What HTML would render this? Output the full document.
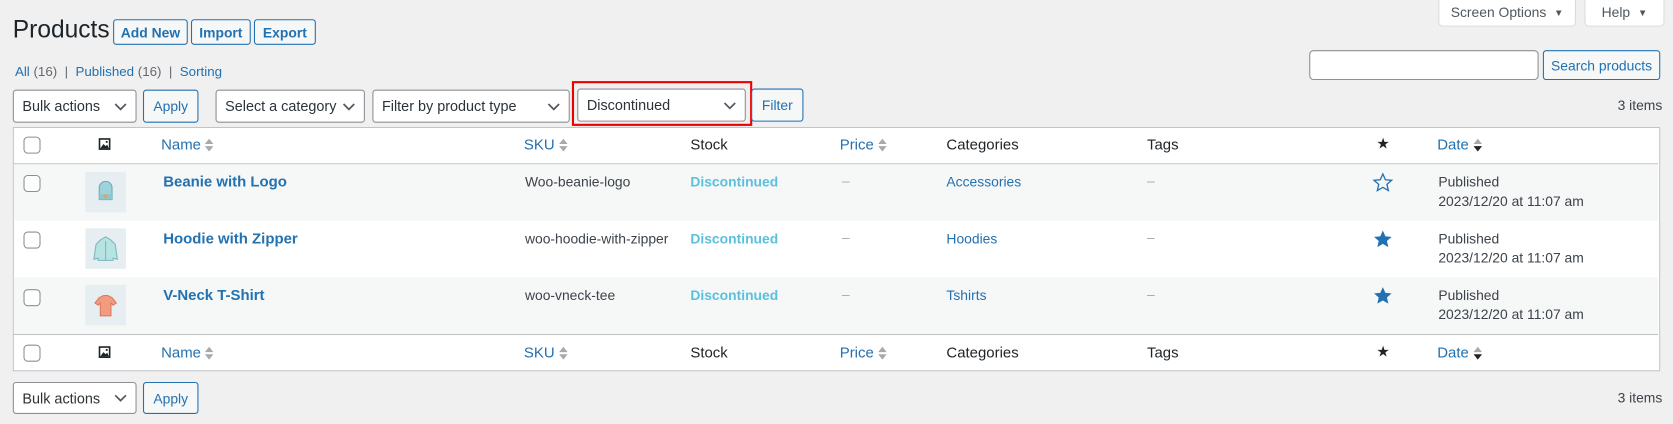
<!DOCTYPE html>
<html><head><meta charset="utf-8"><style>
*{box-sizing:border-box;margin:0;padding:0}
html,body{width:1673px;height:424px;overflow:hidden}
body{background:#f0f0f1;font-family:"Liberation Sans",sans-serif;font-size:13px;color:#3c434a;position:relative}
#w{position:absolute;left:0;top:0;width:1568px;height:397px;transform:scale(1.067);transform-origin:0 0}
.a{position:absolute;white-space:nowrap}
.btn{position:absolute;border:1px solid #2271b1;color:#2271b1;background:#f6f7f7;border-radius:3px;display:flex;align-items:center;justify-content:center;font-size:13px}
.sel{position:absolute;border:1px solid #8c8f94;background:#fff;border-radius:3px;color:#2c3338;font-size:13.5px;padding-left:8px;display:flex;align-items:center}
.sel svg{position:absolute;right:8px;top:50%;margin-top:-4px}
.l{color:#2271b1}
.cb{position:absolute;width:16px;height:16px;border:1px solid #8c8f94;border-radius:4px;background:#fff;left:22px}
.row{position:absolute;left:13px;width:1541px}
.thumb{position:absolute;left:80px;width:38px;height:38px;background:#e7eef1}
.sort{display:inline-block;vertical-align:middle;margin-left:4px}
</style></head><body><div id="w">
<div class="a" style="left:12px;top:14px;font-size:23px;color:#1d2327">Products</div>
<div class="btn" style="left:106px;top:18px;width:70px;height:24px;font-weight:bold">Add New</div>
<div class="btn" style="left:179px;top:18px;width:56px;height:24px;font-weight:bold">Import</div>
<div class="btn" style="left:238px;top:18px;width:58px;height:24px;font-weight:bold">Export</div>

<div style="position:absolute;left:1348px;top:-2px;width:129px;height:27px;background:#fff;border:1px solid #dcdcde;border-radius:0 0 4px 4px;color:#50575e;font-size:13px;display:flex;align-items:center;justify-content:center">Screen Options&nbsp;&nbsp;<span style="font-size:9px">▼</span></div>
<div style="position:absolute;left:1485px;top:-2px;width:75px;height:27px;background:#fff;border:1px solid #dcdcde;border-radius:0 0 4px 4px;color:#50575e;font-size:13px;display:flex;align-items:center;justify-content:center">Help&nbsp;&nbsp;<span style="font-size:9px">▼</span></div>

<div class="a" style="left:14px;top:60px;font-size:12.5px;color:#646970"><span class="l">All</span> (16) &nbsp;|&nbsp; <span class="l">Published</span> (16) &nbsp;|&nbsp; <span class="l">Sorting</span></div>

<div style="position:absolute;left:1227px;top:47px;width:215px;height:28px;background:#fff;border:1px solid #8c8f94;border-radius:4px"></div>
<div class="btn" style="left:1446px;top:47px;width:110px;height:28px">Search products</div>

<svg width="0" height="0" style="position:absolute"><defs><symbol id="ch" viewBox="0 0 12 8"><path d="M1 1.5l5 5 5-5" fill="none" stroke="#50575e" stroke-width="1.6"/></symbol></defs></svg>

<div class="sel" style="left:12px;top:84px;width:116px;height:31px">Bulk actions<svg width="12" height="8"><use href="#ch"/></svg></div>
<div class="btn" style="left:134px;top:84px;width:52px;height:31px">Apply</div>
<div class="sel" style="left:202px;top:84px;width:140px;height:31px">Select a category<svg width="12" height="8"><use href="#ch"/></svg></div>
<div class="sel" style="left:349px;top:84px;width:185px;height:31px">Filter by product type<svg width="12" height="8"><use href="#ch"/></svg></div>
<div style="position:absolute;left:536px;top:76px;width:169px;height:42px;border:2px solid #e00"></div>
<div class="sel" style="left:541px;top:83px;width:158px;height:31px">Discontinued<svg width="12" height="8"><use href="#ch"/></svg></div>
<div class="btn" style="left:704px;top:83px;width:49px;height:31px">Filter</div>
<div class="a" style="left:1516px;top:91px;color:#3c434a">3 items</div>

<div style="position:absolute;left:12px;top:119px;width:1544px;height:229px;border:1px solid #c3c4c7;background:#fff"></div>
<div class="row" style="top:153px;height:1px;background:#c3c4c7"></div>
<div class="row" style="top:154px;height:53px;background:#f6f7f7"></div>
<div class="row" style="top:260px;height:53px;background:#f6f7f7"></div>
<div class="row" style="top:313px;height:1px;background:#c3c4c7"></div>

<div class="cb" style="top:128px"></div>
<div class="cb" style="top:323px"></div>

<svg class="a" style="left:92px;top:129px" width="12" height="12" viewBox="0 0 12 12"><rect x="0.5" y="0.5" width="11" height="11" fill="#1d2327"/><rect x="2" y="2" width="8" height="8" fill="#fff"/><path d="M2 10l3-4 2 2 1.5-1.5L10 10z" fill="#1d2327"/><circle cx="8" cy="4" r="1" fill="#1d2327"/></svg>
<svg class="a" style="left:92px;top:324px" width="12" height="12" viewBox="0 0 12 12"><rect x="0.5" y="0.5" width="11" height="11" fill="#1d2327"/><rect x="2" y="2" width="8" height="8" fill="#fff"/><path d="M2 10l3-4 2 2 1.5-1.5L10 10z" fill="#1d2327"/><circle cx="8" cy="4" r="1" fill="#1d2327"/></svg>

<div class="a l" style="left:151px;top:127px;font-size:14px">Name<svg class="sort" width="8" height="14"><path d="M0 6l4-5 4 5z" fill="#a7aaad"/><path d="M0 8l4 5 4-5z" fill="#a7aaad"/></svg></div>
<div class="a l" style="left:491px;top:127px;font-size:14px">SKU<svg class="sort" width="8" height="14"><path d="M0 6l4-5 4 5z" fill="#a7aaad"/><path d="M0 8l4 5 4-5z" fill="#a7aaad"/></svg></div>
<div class="a" style="left:647px;top:127px;font-size:14px;color:#1d2327">Stock</div>
<div class="a l" style="left:787px;top:127px;font-size:14px">Price<svg class="sort" width="8" height="14"><path d="M0 6l4-5 4 5z" fill="#a7aaad"/><path d="M0 8l4 5 4-5z" fill="#a7aaad"/></svg></div>
<div class="a" style="left:887px;top:127px;font-size:14px;color:#1d2327">Categories</div>
<div class="a" style="left:1075px;top:127px;font-size:14px;color:#1d2327">Tags</div>
<div class="a" style="left:1290px;top:126px;font-size:14px;color:#1d2327">★</div>
<div class="a l" style="left:1347px;top:127px;font-size:14px">Date<svg class="sort" width="8" height="14"><path d="M0 6l4-5 4 5z" fill="#a7aaad"/><path d="M0 8l4 5 4-5z" fill="#1d2327"/></svg></div>

<div class="a l" style="left:151px;top:322px;font-size:14px">Name<svg class="sort" width="8" height="14"><path d="M0 6l4-5 4 5z" fill="#a7aaad"/><path d="M0 8l4 5 4-5z" fill="#a7aaad"/></svg></div>
<div class="a l" style="left:491px;top:322px;font-size:14px">SKU<svg class="sort" width="8" height="14"><path d="M0 6l4-5 4 5z" fill="#a7aaad"/><path d="M0 8l4 5 4-5z" fill="#a7aaad"/></svg></div>
<div class="a" style="left:647px;top:322px;font-size:14px;color:#1d2327">Stock</div>
<div class="a l" style="left:787px;top:322px;font-size:14px">Price<svg class="sort" width="8" height="14"><path d="M0 6l4-5 4 5z" fill="#a7aaad"/><path d="M0 8l4 5 4-5z" fill="#a7aaad"/></svg></div>
<div class="a" style="left:887px;top:322px;font-size:14px;color:#1d2327">Categories</div>
<div class="a" style="left:1075px;top:322px;font-size:14px;color:#1d2327">Tags</div>
<div class="a" style="left:1290px;top:321px;font-size:14px;color:#1d2327">★</div>
<div class="a l" style="left:1347px;top:322px;font-size:14px">Date<svg class="sort" width="8" height="14"><path d="M0 6l4-5 4 5z" fill="#a7aaad"/><path d="M0 8l4 5 4-5z" fill="#1d2327"/></svg></div>

<div class="cb" style="top:164px"></div>
<div class="thumb" style="top:161px"><svg width="38" height="38"><path d="M13 26V15a6 6 0 0 1 12 0v11z" fill="#9fd3dc" stroke="#6aa9b8"/><rect x="13" y="21" width="12" height="5" fill="#8cc7d2"/><circle cx="19" cy="23" r="1.8" fill="#e9a15a"/></svg></div>
<div class="a l" style="left:153px;top:162px;font-size:14px;font-weight:bold">Beanie with Logo</div>
<div class="a" style="left:492px;top:163px">Woo-beanie-logo</div>
<div class="a" style="left:647px;top:163px;color:#5bc0de;font-weight:bold">Discontinued</div>
<div class="a" style="left:789px;top:162px;color:#a7aaad">–</div>
<div class="a l" style="left:887px;top:163px">Accessories</div>
<div class="a" style="left:1075px;top:162px;color:#a7aaad">–</div>
<svg class="a" style="left:1286px;top:161px" width="20" height="20" viewBox="0 0 24 24"><path d="M12 2.5l2.9 6.5 7 .6-5.3 4.6 1.6 6.9L12 17.5l-6.2 3.6 1.6-6.9L2.1 9.6l7-.6z" fill="none" stroke="#2271b1" stroke-width="1.5"/></svg>
<div class="a" style="left:1348px;top:163px">Published</div>
<div class="a" style="left:1348px;top:181px">2023/12/20 at 11:07 am</div>

<div class="cb" style="top:217px"></div>
<div class="thumb" style="top:214px"><svg width="38" height="38"><path d="M14 11l5-3 5 3 4 4 2 14-4-1v2H12v-2l-4 1 2-14z" fill="#b7e3e2" stroke="#7ab8bd"/><path d="M19 12v18" stroke="#7ab8bd"/></svg></div>
<div class="a l" style="left:153px;top:215px;font-size:14px;font-weight:bold">Hoodie with Zipper</div>
<div class="a" style="left:492px;top:216px">woo-hoodie-with-zipper</div>
<div class="a" style="left:647px;top:216px;color:#5bc0de;font-weight:bold">Discontinued</div>
<div class="a" style="left:789px;top:215px;color:#a7aaad">–</div>
<div class="a l" style="left:887px;top:216px">Hoodies</div>
<div class="a" style="left:1075px;top:215px;color:#a7aaad">–</div>
<svg class="a" style="left:1286px;top:214px" width="20" height="20" viewBox="0 0 24 24"><path d="M12 2.5l2.9 6.5 7 .6-5.3 4.6 1.6 6.9L12 17.5l-6.2 3.6 1.6-6.9L2.1 9.6l7-.6z" fill="#2271b1"/></svg>
<div class="a" style="left:1348px;top:216px">Published</div>
<div class="a" style="left:1348px;top:234px">2023/12/20 at 11:07 am</div>

<div class="cb" style="top:271px"></div>
<div class="thumb" style="top:267px"><svg width="38" height="38"><path d="M13 12l4-2h4l4 2 4 5-3 2-2-2v12H14V17l-2 2-3-2z" fill="#f39b80" stroke="#d97a60"/></svg></div>
<div class="a l" style="left:153px;top:268px;font-size:14px;font-weight:bold">V-Neck T-Shirt</div>
<div class="a" style="left:492px;top:269px">woo-vneck-tee</div>
<div class="a" style="left:647px;top:269px;color:#5bc0de;font-weight:bold">Discontinued</div>
<div class="a" style="left:789px;top:268px;color:#a7aaad">–</div>
<div class="a l" style="left:887px;top:269px">Tshirts</div>
<div class="a" style="left:1075px;top:268px;color:#a7aaad">–</div>
<svg class="a" style="left:1286px;top:267px" width="20" height="20" viewBox="0 0 24 24"><path d="M12 2.5l2.9 6.5 7 .6-5.3 4.6 1.6 6.9L12 17.5l-6.2 3.6 1.6-6.9L2.1 9.6l7-.6z" fill="#2271b1"/></svg>
<div class="a" style="left:1348px;top:269px">Published</div>
<div class="a" style="left:1348px;top:287px">2023/12/20 at 11:07 am</div>

<div class="sel" style="left:12px;top:358px;width:116px;height:30px">Bulk actions<svg width="12" height="8"><use href="#ch"/></svg></div>
<div class="btn" style="left:134px;top:358px;width:52px;height:30px">Apply</div>
<div class="a" style="left:1516px;top:365px">3 items</div>
</div></body></html>
